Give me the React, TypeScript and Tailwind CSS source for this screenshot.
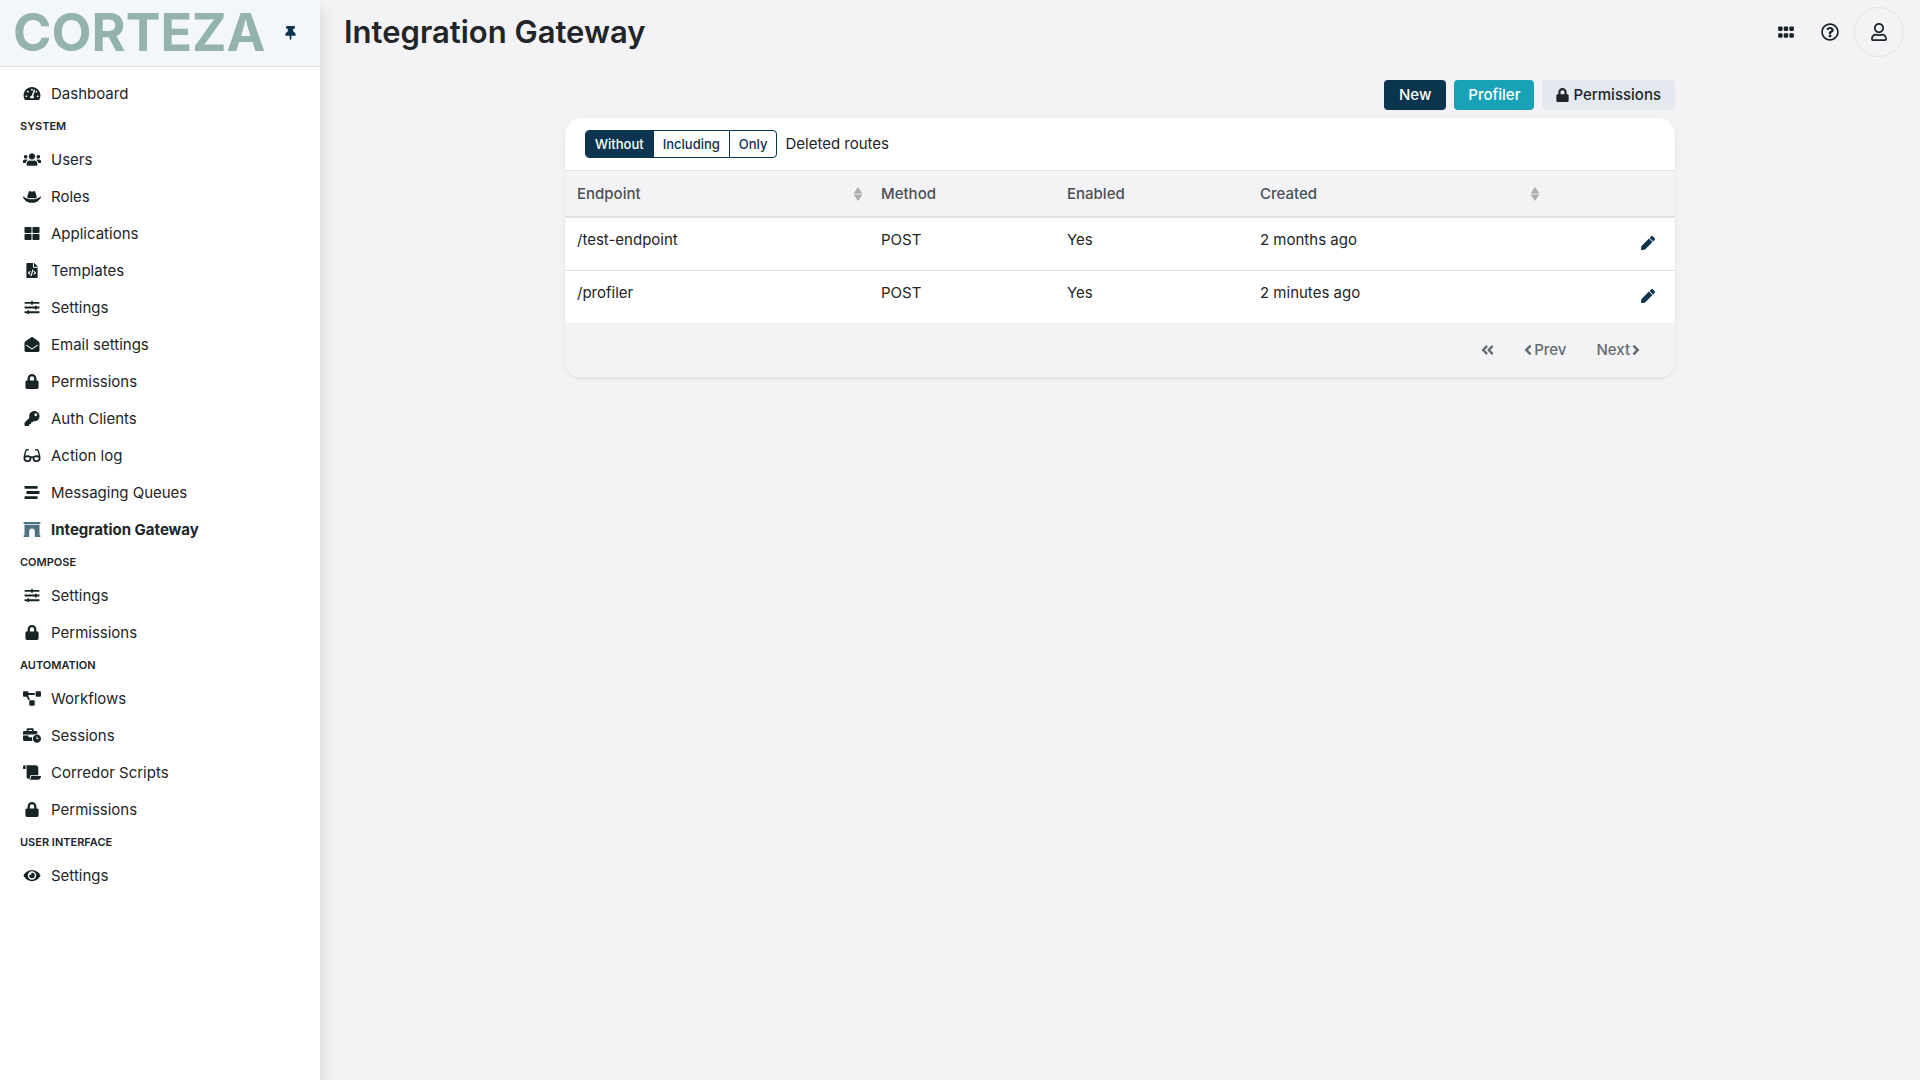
import type { ReactNode } from "react";
import type { IconType } from "react-icons";
import {
  FaTachometerAlt, FaUsers, FaHatCowboy, FaThLarge, FaFileCode, FaSlidersH, FaEnvelopeOpen, FaLock, FaKey,
  FaGlasses, FaStream, FaArchway, FaProjectDiagram, FaBusinessTime, FaScroll, FaEye, FaThumbtack,
  FaGripHorizontal, FaRegQuestionCircle, FaRegUser, FaPen, FaAngleDoubleLeft, FaAngleLeft, FaAngleRight,
} from "react-icons/fa";

type Item = { label: string; icon: IconType; active?: boolean };
type Section = { title?: string; items: Item[] };

const sections: Section[] = [
  { items: [{ label: "Dashboard", icon: FaTachometerAlt }] },
  {
    title: "SYSTEM",
    items: [
      { label: "Users", icon: FaUsers },
      { label: "Roles", icon: FaHatCowboy },
      { label: "Applications", icon: FaThLarge },
      { label: "Templates", icon: FaFileCode },
      { label: "Settings", icon: FaSlidersH },
      { label: "Email settings", icon: FaEnvelopeOpen },
      { label: "Permissions", icon: FaLock },
      { label: "Auth Clients", icon: FaKey },
      { label: "Action log", icon: FaGlasses },
      { label: "Messaging Queues", icon: FaStream },
      { label: "Integration Gateway", icon: FaArchway, active: true },
    ],
  },
  {
    title: "COMPOSE",
    items: [
      { label: "Settings", icon: FaSlidersH },
      { label: "Permissions", icon: FaLock },
    ],
  },
  {
    title: "AUTOMATION",
    items: [
      { label: "Workflows", icon: FaProjectDiagram },
      { label: "Sessions", icon: FaBusinessTime },
      { label: "Corredor Scripts", icon: FaScroll },
      { label: "Permissions", icon: FaLock },
    ],
  },
  { title: "USER INTERFACE", items: [{ label: "Settings", icon: FaEye }] },
];

const routes = [
  { endpoint: "/test-endpoint", method: "POST", enabled: "Yes", created: "2 months ago" },
  { endpoint: "/profiler", method: "POST", enabled: "Yes", created: "2 minutes ago" },
];

function Sidebar() {
  return (
    <aside className="z-10 w-80 shrink-0 bg-white shadow-[0_8px_16px_rgba(0,0,0,0.15)]">
      <div className="flex h-[67px] items-center justify-between border-b border-[#dee2e6] bg-[#f3f7fa] pr-6 pl-[13px]">
        <a href="#home" className="text-[52px] leading-none font-bold text-[#95b3ad]">CORTEZA</a>
        <button type="button" aria-label="Unpin sidebar" className="text-[#0b344e]">
          <FaThumbtack className="h-[14px] w-[11px]" />
        </button>
      </div>
      <nav className="flex flex-col pt-2">
        {sections.map((section) => (
          <div key={section.title ?? "main"}>
            {section.title && (
              <h2 className="h-[29px] px-5 pt-1 text-[11px] leading-5 font-semibold">{section.title}</h2>
            )}
            <ul>
              {section.items.map(({ label, icon: Icon, active }) => (
                <li key={label}>
                  <a
                    href="#nav"
                    aria-current={active ? "page" : undefined}
                    className={`flex h-[37px] items-center gap-[10px] pl-[23px] ${active ? "font-bold" : ""}`}
                  >
                    <Icon className={`h-[15px] w-[18px] ${active ? "text-[#4d7281]" : "text-[#162425]"}`} />
                    {label}
                  </a>
                </li>
              ))}
            </ul>
          </div>
        ))}
      </nav>
    </aside>
  );
}

function SortIcon() {
  return (
    <svg viewBox="0 0 10 16" className="h-4 w-[10px] fill-[#acacae]" aria-hidden="true">
      <path d="M5 1 9.4 7.4H.6ZM5 15 .6 8.6H9.4Z" />
    </svg>
  );
}

function HeadCell({ children, className, sortable }: { children: ReactNode; className: string; sortable?: boolean }) {
  return (
    <th
      scope="col"
      className={`border-t border-b-2 border-[#dee2e6] py-0 pr-[6px] pl-3 text-left font-medium ${className}`}
    >
      {sortable ? (
        <button type="button" className="flex w-full items-center justify-between">
          {children}
          <SortIcon />
        </button>
      ) : (
        children
      )}
    </th>
  );
}

export default function App() {
  return (
    <div className="flex min-h-screen bg-[#f3f3f5] font-['Inter','Open_Sans',sans-serif] text-[15px] leading-[22px] text-[#212529]">
      <Sidebar />
      <div className="min-w-0 flex-1">
        <header className="flex h-16 items-center justify-between pr-4 pl-6">
          <h1 className="text-[31px] leading-9 font-semibold">Integration Gateway</h1>
          <div className="flex items-center text-[#162425]">
            <button type="button" aria-label="Applications" className="flex w-11 justify-center">
              <FaGripHorizontal className="h-[18px] w-[18px]" />
            </button>
            <button type="button" aria-label="Help" className="flex w-11 justify-center">
              <FaRegQuestionCircle className="h-[18px] w-[18px]" />
            </button>
            <button
              type="button"
              aria-label="Profile"
              className="ml-[2px] flex size-[50px] items-center justify-center rounded-full border border-[#e4e4e7]"
            >
              <FaRegUser className="h-[18px] w-4" />
            </button>
          </div>
        </header>

        <main className="mx-auto max-w-[1110px] pt-4">
          <div className="flex justify-end gap-2 font-medium">
            <button type="button" className="h-[30px] rounded-[4px] bg-[#0b344e] px-[15px] text-white">New</button>
            <button type="button" className="h-[30px] rounded-[4px] bg-[#18a2b8] px-[14px] text-white">Profiler</button>
            <button type="button" className="flex h-[30px] items-center gap-1 rounded-[4px] bg-[#e4e9ef] px-[14px]">
              <FaLock className="h-[14px] w-[13px]" />
              Permissions
            </button>
          </div>

          <section className="mt-2 overflow-hidden rounded-2xl bg-white shadow-[0_2px_4px_rgba(0,0,0,0.075)]">
            <div className="flex items-center gap-2 px-5 py-3">
              <div role="group" aria-label="Deleted routes" className="flex divide-x divide-[#0b344e] overflow-hidden rounded-[4px] border border-[#0b344e] text-[13px] font-medium text-[#0b344e]">
                <button type="button" aria-pressed="true" className="h-[26px] bg-[#0b344e] px-[9px] text-white">Without</button>
                <button type="button" aria-pressed="false" className="h-[26px] px-[9px]">Including</button>
                <button type="button" aria-pressed="false" className="h-[26px] px-[9px]">Only</button>
              </div>
              <span>Deleted routes</span>
            </div>

            <table className="w-full table-fixed border-separate border-spacing-0">
              <thead>
                <tr className="h-12 bg-[#f3f3f5] text-[#495057]">
                  <HeadCell className="w-[304px]" sortable>Endpoint</HeadCell>
                  <HeadCell className="w-[186px]">Method</HeadCell>
                  <HeadCell className="w-[193px]">Enabled</HeadCell>
                  <HeadCell className="w-[298px]" sortable>Created</HeadCell>
                  <td className="border-t border-b-2 border-[#dee2e6]" />
                </tr>
              </thead>
              <tbody className="[&>tr+tr>td]:border-t [&>tr+tr>td]:border-[#dee2e6]">
                {routes.map((r) => (
                  <tr key={r.endpoint} className="h-[52px] align-top last:h-[53px]">
                    <td className="px-3 pt-[11px]">{r.endpoint}</td>
                    <td className="px-3 pt-[11px]">{r.method}</td>
                    <td className="px-3 pt-[11px]">{r.enabled}</td>
                    <td className="px-3 pt-[11px]">{r.created}</td>
                    <td className="px-5 pt-[18px]">
                      <a href="#edit" aria-label={`Edit ${r.endpoint}`} className="ml-auto block w-fit text-[#0b344e]">
                        <FaPen className="h-[14px] w-[14px]" />
                      </a>
                    </td>
                  </tr>
                ))}
              </tbody>
            </table>

            <div className="flex h-[54px] items-center justify-end bg-[#f3f3f5] pr-[35px] font-medium text-[#636b6f]">
              <button type="button" aria-label="First page" className="mr-[30px]">
                <FaAngleDoubleLeft className="h-4 w-[13px]" />
              </button>
              <button type="button" className="mr-[30px] flex items-center gap-[2px]">
                <FaAngleLeft className="h-4 w-2" />
                Prev
              </button>
              <button type="button" className="flex items-center gap-[2px]">
                Next
                <FaAngleRight className="h-4 w-2" />
              </button>
            </div>
          </section>
        </main>
      </div>
    </div>
  );
}
